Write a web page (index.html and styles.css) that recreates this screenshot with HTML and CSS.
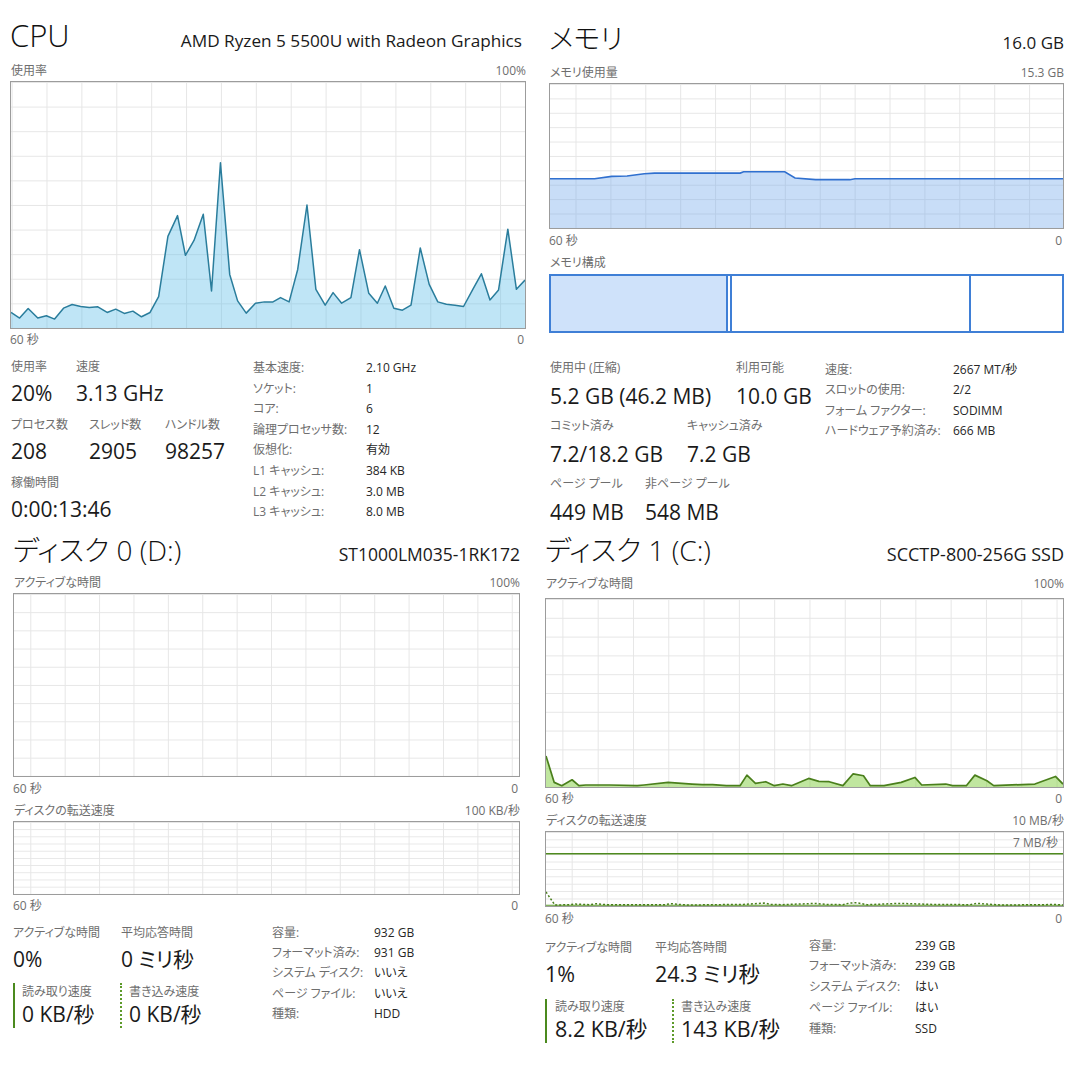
FILE: index.html
```html
<!DOCTYPE html>
<html lang="ja">
<head>
<meta charset="utf-8">
<title>Task Manager</title>
<link rel="stylesheet" href="styles.css">
</head>
<body>
<div class="screen">

  <section class="panel cpu">
    <header class="head"><h1 class="title">CPU</h1><span class="model">AMD Ryzen 5 5500U with Radeon Graphics</span></header>
    <div class="cap"><span>使用率</span><span>100%</span></div>
    <div class="chart chart-cpu">
      <svg viewBox="30 -117 1497 744" preserveAspectRatio="none">
        <polygon class="fill-cpu" points="30,580 55,597 80,568 108,597 133,590 157,600 183,567 208,556 233,562 258,565 283,563 310,580 335,570 360,583 385,576 410,593 435,580 460,532 487,350 515,287 538,407 563,362 590,283 614,515 640,127 667,465 690,545 715,582 742,552 768,548 793,548 815,535 840,548 865,450 892,255 918,510 945,558 968,520 993,552 1020,535 1045,390 1072,522 1097,552 1120,500 1145,567 1170,573 1195,558 1222,385 1248,495 1273,548 1298,555 1323,558 1348,562 1375,510 1400,463 1425,542 1450,512 1477,328 1502,510 1527,482 1527,627 30,627"/>
        <polyline class="line-cpu" vector-effect="non-scaling-stroke" points="30,580 55,597 80,568 108,597 133,590 157,600 183,567 208,556 233,562 258,565 283,563 310,580 335,570 360,583 385,576 410,593 435,580 460,532 487,350 515,287 538,407 563,362 590,283 614,515 640,127 667,465 690,545 715,582 742,552 768,548 793,548 815,535 840,548 865,450 892,255 918,510 945,558 968,520 993,552 1020,535 1045,390 1072,522 1097,552 1120,500 1145,567 1170,573 1195,558 1222,385 1248,495 1273,548 1298,555 1323,558 1348,562 1375,510 1400,463 1425,542 1450,512 1477,328 1502,510 1527,482"/>
      </svg>
    </div>
    <div class="axis"><span>60 秒</span><span>0</span></div>
    <div class="stats">
      <div class="figs">
        <div class="fig-row">
          <div class="fig w65"><div class="fl">使用率</div><div class="fv">20%</div></div>
          <div class="fig"><div class="fl">速度</div><div class="fv">3.13 GHz</div></div>
        </div>
        <div class="fig-row">
          <div class="fig w78"><div class="fl">プロセス数</div><div class="fv">208</div></div>
          <div class="fig w76"><div class="fl">スレッド数</div><div class="fv">2905</div></div>
          <div class="fig"><div class="fl">ハンドル数</div><div class="fv">98257</div></div>
        </div>
        <div class="fig-row">
          <div class="fig"><div class="fl">稼働時間</div><div class="fv">0:00:13:46</div></div>
        </div>
      </div>
      <dl class="props">
        <dt>基本速度:</dt><dd>2.10 GHz</dd>
        <dt>ソケット:</dt><dd>1</dd>
        <dt>コア:</dt><dd>6</dd>
        <dt>論理プロセッサ数:</dt><dd>12</dd>
        <dt>仮想化:</dt><dd>有効</dd>
        <dt>L1 キャッシュ:</dt><dd>384 KB</dd>
        <dt>L2 キャッシュ:</dt><dd>3.0 MB</dd>
        <dt>L3 キャッシュ:</dt><dd>8.0 MB</dd>
      </dl>
    </div>
  </section>

  <section class="panel mem">
    <header class="head"><h1 class="title title-jp">メモリ</h1><span class="model">16.0 GB</span></header>
    <div class="cap"><span>メモリ使用量</span><span>15.3 GB</span></div>
    <div class="chart chart-mem">
      <svg viewBox="25 -111 1497 438" preserveAspectRatio="none">
        <polygon class="fill-mem" points="25,177 155,177 205,170 250,169 300,162 330,160 580,160 590,156 710,156 740,175 800,180 900,180 915,177 1522,177 1522,327 25,327"/>
        <polyline class="line-mem" vector-effect="non-scaling-stroke" points="25,177 155,177 205,170 250,169 300,162 330,160 580,160 590,156 710,156 740,175 800,180 900,180 915,177 1522,177"/>
      </svg>
    </div>
    <div class="axis"><span>60 秒</span><span>0</span></div>
    <div class="cap cap-comp"><span>メモリ構成</span></div>
    <div class="comp">
      <div class="seg inuse"></div>
      <div class="seg mod"></div>
      <div class="seg standby"></div>
      <div class="seg free"></div>
    </div>
    <div class="stats">
      <div class="figs">
        <div class="fig-row">
          <div class="fig w186"><div class="fl">使用中 (圧縮)</div><div class="fv">5.2 GB (46.2 MB)</div></div>
          <div class="fig"><div class="fl">利用可能</div><div class="fv">10.0 GB</div></div>
        </div>
        <div class="fig-row">
          <div class="fig w137"><div class="fl">コミット済み</div><div class="fv">7.2/18.2 GB</div></div>
          <div class="fig"><div class="fl">キャッシュ済み</div><div class="fv">7.2 GB</div></div>
        </div>
        <div class="fig-row">
          <div class="fig w95"><div class="fl">ページ プール</div><div class="fv">449 MB</div></div>
          <div class="fig"><div class="fl">非ページ プール</div><div class="fv">548 MB</div></div>
        </div>
      </div>
      <dl class="props">
        <dt>速度:</dt><dd>2667 MT/秒</dd>
        <dt>スロットの使用:</dt><dd>2/2</dd>
        <dt>フォーム ファクター:</dt><dd>SODIMM</dd>
        <dt>ハードウェア予約済み:</dt><dd>666 MB</dd>
      </dl>
    </div>
  </section>

  <section class="panel d0">
    <header class="head"><h1 class="title title-jp">ディスク 0 (D:)</h1><span class="model">ST1000LM035-1RK172</span></header>
    <div class="cap"><span>アクティブな時間</span><span>100%</span></div>
    <div class="chart chart-a"></div>
    <div class="axis axis-a"><span>60 秒</span><span>0</span></div>
    <div class="cap"><span>ディスクの転送速度</span><span>100 KB/秒</span></div>
    <div class="chart chart-b"></div>
    <div class="axis axis-b"><span>60 秒</span><span>0</span></div>
    <div class="stats">
      <div class="figs">
        <div class="fig-row">
          <div class="fig w108"><div class="fl">アクティブな時間</div><div class="fv">0%</div></div>
          <div class="fig"><div class="fl">平均応答時間</div><div class="fv">0 ミリ秒</div></div>
        </div>
        <div class="rw-row">
          <div class="rw read w107"><div class="fl">読み取り速度</div><div class="fv">0 KB/秒</div></div>
          <div class="rw write"><div class="fl">書き込み速度</div><div class="fv">0 KB/秒</div></div>
        </div>
      </div>
      <dl class="props">
        <dt>容量:</dt><dd>932 GB</dd>
        <dt>フォーマット済み:</dt><dd>931 GB</dd>
        <dt>システム ディスク:</dt><dd>いいえ</dd>
        <dt>ページ ファイル:</dt><dd>いいえ</dd>
        <dt>種類:</dt><dd>HDD</dd>
      </dl>
    </div>
  </section>

  <section class="panel d1">
    <header class="head"><h1 class="title title-jp">ディスク 1 (C:)</h1><span class="model">SCCTP-800-256G SSD</span></header>
    <div class="cap cap-a"><span>アクティブな時間</span><span>100%</span></div>
    <div class="chart chart-a">
      <svg viewBox="14 -426 1508 570" preserveAspectRatio="none">
        <polygon class="fill-disk" points="14,50 38,130 60,140 90,122 110,140 130,138 200,138 280,140 300,138 370,130 410,133 440,135 470,137 500,137 540,140 580,140 600,108 625,133 655,128 680,140 705,135 730,140 780,118 810,127 840,128 880,140 910,104 940,110 960,140 1000,140 1050,130 1090,115 1110,138 1180,135 1200,140 1240,140 1265,108 1300,125 1320,140 1440,135 1500,112 1522,135 1522,144 14,144"/>
        <polyline class="line-disk" vector-effect="non-scaling-stroke" points="14,50 38,130 60,140 90,122 110,140 130,138 200,138 280,140 300,138 370,130 410,133 440,135 470,137 500,137 540,140 580,140 600,108 625,133 655,128 680,140 705,135 730,140 780,118 810,127 840,128 880,140 910,104 940,110 960,140 1000,140 1050,130 1090,115 1110,138 1180,135 1200,140 1240,140 1265,108 1300,125 1320,140 1440,135 1500,112 1522,135"/>
      </svg>
    </div>
    <div class="axis axis-a"><span>60 秒</span><span>0</span></div>
    <div class="cap cap-b"><span>ディスクの転送速度</span><span>10 MB/秒</span></div>
    <div class="chart chart-b">
      <svg viewBox="14 273 1508 228" preserveAspectRatio="none">
        <line class="line-max" vector-effect="non-scaling-stroke" x1="14" y1="340" x2="1522" y2="340"/>
        <polyline class="line-read" vector-effect="non-scaling-stroke" points="14,499 1522,499"/>
        <polyline class="line-write" vector-effect="non-scaling-stroke" points="14,458 40,498 80,497 100,495 140,497 160,494 190,497 360,497 380,494 400,496 430,498 590,496 620,494 650,492 670,496 700,497 750,495 800,493 830,496 880,497 900,492 920,491 950,497 1020,494 1050,493 1140,496 1250,497 1270,493 1300,495 1340,498 1470,497 1490,496 1522,498"/>
      </svg>
      <span class="scale-tag">7 MB/秒</span>
    </div>
    <div class="axis axis-b"><span>60 秒</span><span>0</span></div>
    <div class="stats">
      <div class="figs">
        <div class="fig-row">
          <div class="fig w110"><div class="fl">アクティブな時間</div><div class="fv">1%</div></div>
          <div class="fig"><div class="fl">平均応答時間</div><div class="fv">24.3 ミリ秒</div></div>
        </div>
        <div class="rw-row">
          <div class="rw read w127"><div class="fl">読み取り速度</div><div class="fv">8.2 KB/秒</div></div>
          <div class="rw write"><div class="fl">書き込み速度</div><div class="fv">143 KB/秒</div></div>
        </div>
      </div>
      <dl class="props">
        <dt>容量:</dt><dd>239 GB</dd>
        <dt>フォーマット済み:</dt><dd>239 GB</dd>
        <dt>システム ディスク:</dt><dd>はい</dd>
        <dt>ページ ファイル:</dt><dd>はい</dd>
        <dt>種類:</dt><dd>SSD</dd>
      </dl>
    </div>
  </section>

</div>
</body>
</html>
```
FILE: styles.css
```css
* { box-sizing: border-box; margin: 0; padding: 0; }
html, body { width: 1080px; height: 1080px; background: #fff; }
body {
  font-family: "Open Sans", "Noto Sans CJK JP", sans-serif;
  font-feature-settings: "palt";
  color: #1c1c1c;
  overflow: hidden;
}

.screen {
  display: grid;
  grid-template-columns: 540px 540px;
  grid-template-rows: 530px 550px;
  width: 1080px;
  height: 1080px;
}

.panel { display: flex; flex-direction: column; }

.head { display: flex; justify-content: space-between; align-items: baseline; flex: none; }
.title { font-size: 31px; line-height: 31px; font-weight: 300; color: #111; white-space: nowrap; }
.title-jp { font-size: 28px; }
.model { font-size: 17px; line-height: 20px; color: #1a1a1a; white-space: nowrap; }

.cap, .axis {
  display: flex;
  justify-content: space-between;
  flex: none;
  font-size: 12px;
  height: 20px;
  line-height: 20px;
  color: #6e6e6e;
  white-space: nowrap;
}
.cap span:first-child { padding-left: 1px; }
.axis { padding-right: 2px; }

.chart {
  --grid: #e6e6e6;
  --cw: 34.9px;
  --cx: 0px;
  position: relative;
  flex: none;
  border: 1px solid #9c9c9c;
  background-color: #fff;
  background-image:
    linear-gradient(to right, var(--grid) 0 1px, transparent 1px),
    linear-gradient(to bottom, var(--grid) 0 1px, transparent 1px);
  background-size: var(--cw) 100%, 100% 10%;
  background-position: var(--cx) 0, 0 0;
}
.chart svg { display: block; width: 100%; height: 100%; }

.fill-cpu { fill: rgba(95, 190, 232, 0.4); }
.line-cpu { fill: none; stroke: #2a7d9c; stroke-width: 1.5; stroke-linejoin: round; }
.fill-mem { fill: rgba(110, 165, 235, 0.38); }
.line-mem { fill: none; stroke: #3070cf; stroke-width: 1.6; }
.fill-disk { fill: rgba(140, 210, 80, 0.55); }
.line-disk { fill: none; stroke: #4a7f1c; stroke-width: 1.7; stroke-linejoin: round; }
.line-max { stroke: #4f8a1f; stroke-width: 1.6; }
.line-read { fill: none; stroke: #5a9a28; stroke-width: 1; }
.line-write { fill: none; stroke: #4a7f1c; stroke-width: 1.5; stroke-dasharray: 2 2; }

.scale-tag {
  position: absolute;
  right: 5px;
  top: 4px;
  font-size: 12px;
  line-height: 14px;
  color: #6e6e6e;
}

/* stats */
.stats { display: flex; flex: none; }
.figs { flex: none; }
.fig-row { display: flex; }
.fig, .rw { flex: none; white-space: nowrap; }
.fl { font-size: 12px; height: 20px; line-height: 20px; color: #6e6e6e; }
.fv { font-size: 21px; height: 32px; line-height: 32px; color: #1a1a1a; }

.rw-row { display: flex; }
.rw { padding-left: 7px; border-left: 2px solid #4b8a1e; }
.rw.write { border-left: 2px dotted #5d9a2a; }

.props {
  display: grid;
  align-content: start;
  font-size: 12px;
  white-space: nowrap;
}
.props dt { color: #6e6e6e; }
.props dd { color: #262626; }

.w65 { width: 65px; }
.w76 { width: 76px; }
.w78 { width: 78px; }
.w95 { width: 95px; }
.w107 { width: 107px; }
.w108 { width: 108px; }
.w110 { width: 110px; }
.w127 { width: 127px; }
.w137 { width: 137px; }
.w186 { width: 186px; }

/* CPU */
.cpu { padding: 0 14px 0 10px; }
.cpu .head { height: 61px; padding-top: 20px; }
.cpu .model { font-size: 17.2px; margin-right: 4px; }
.cpu .chart { height: 248px; --cw: 34.9px; --cx: 0.6px; }
.cpu .axis { height: 22px; line-height: 22px; }
.cpu .figs { width: 243px; padding: 6px 0 0 1px; }
.cpu .fig-row { margin-bottom: 6px; }
.cpu .props { grid-template-columns: 113px auto; grid-auto-rows: 20.6px; line-height: 20.6px; padding-top: 7px; }

/* Memory */
.mem { padding: 0 16px 0 9px; }
.mem .head { height: 63px; padding-top: 23px; }
.mem .chart { height: 146px; --cw: 34.9px; --cx: 25.5px; }
.mem .axis { height: 23px; line-height: 23px; }
.mem .cap-comp { height: 22px; line-height: 22px; }
.comp { display: flex; flex: none; height: 59px; border: 2px solid #3f7fd6; }
.seg { height: 100%; flex: none; }
.inuse { width: 177px; background: #cfe2fa; border-right: 2px solid #3f7fd6; }
.mod { width: 4px; border-right: 2px solid #3f7fd6; }
.standby { width: 239px; border-right: 2px solid #3f7fd6; }
.free { flex: 1; }
.mem .figs { width: 276px; padding: 24px 0 0 1px; }
.mem .fig-row { margin-bottom: 2px; }
.mem .fl { height: 22px; line-height: 22px; }
.mem .fv { height: 34px; line-height: 34px; }
.mem .props { grid-template-columns: 128px auto; grid-auto-rows: 20.4px; line-height: 20.4px; padding-top: 27px; }

/* Disk 0 */
.d0 { padding: 0 20px 0 13px; }
.d0 .head { height: 43px; padding-top: 5px; }
.d0 .model { font-size: 17.5px; }
.d0 .chart-a { height: 184px; --cw: 34.4px; --cx: 16.3px; }
.d0 .axis-a { height: 24px; line-height: 24px; }
.d0 .chart-b { height: 74px; --cw: 34.4px; --cx: 16.3px; }
.d0 .axis-b { height: 22px; line-height: 22px; }
.d0 .figs { width: 259px; padding-top: 6px; }
.d0 .rw-row { margin-top: 8px; }
.d0 .rw .fl { height: 17px; line-height: 17px; }
.d0 .rw .fv { height: 28px; line-height: 28px; }
.d0 .props { grid-template-columns: 102px auto; grid-auto-rows: 20.2px; line-height: 20.2px; padding-top: 6px; }

/* Disk 1 */
.d1 { padding: 0 16px 0 5px; }
.d1 .head { height: 44px; padding-top: 5px; }
.d1 .model { font-size: 18px; }
.d1 .cap-a { height: 24px; padding-bottom: 4px; }
.d1 .chart-a { height: 190px; --cw: 35.3px; --cx: 16.4px; }
.d1 .axis-a { height: 22px; line-height: 22px; }
.d1 .cap-b { height: 21px; line-height: 21px; }
.d1 .chart-b { height: 76px; --cw: 35.2px; --cx: 25.7px; }
.d1 .axis-b { height: 24px; line-height: 24px; }
.d1 .fv { font-size: 21.5px; }
.d1 .figs { width: 264px; padding-top: 6.5px; }
.d1 .rw-row { margin-top: 9.5px; }
.d1 .rw .fl { height: 16px; line-height: 16px; }
.d1 .rw .fv { height: 28px; line-height: 28px; }
.d1 .rw.read { padding-left: 8px; }
.d1 .props { grid-template-columns: 106px auto; grid-auto-rows: 20.75px; line-height: 20.75px; padding-top: 4.6px; }
```
